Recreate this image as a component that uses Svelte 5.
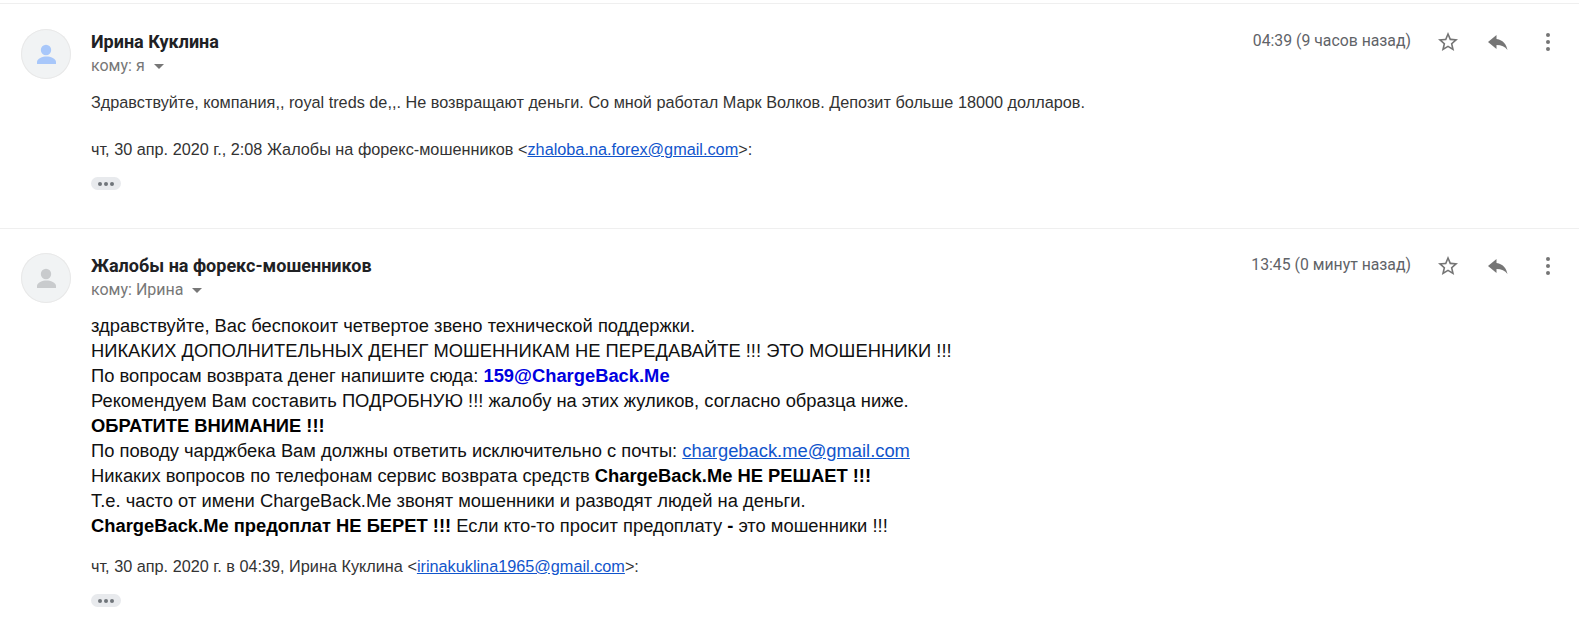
<script>
	const messages = [
		{ from: 'Ирина Куклина', to: 'кому: я', time: '04:39 (9 часов назад)', avatar: 'blue' },
		{ from: 'Жалобы на форекс-мошенников', to: 'кому: Ирина', time: '13:45 (0 минут назад)', avatar: 'grey' }
	];
</script>

{#snippet header(m)}
	<div class="avatar {m.avatar}">
		<svg viewBox="0 0 50 50" width="50" height="50">
			<circle cx="25" cy="21" r="5.2" />
			<path d="M16 33c0-3.500 5.500-5.500 9.500-5.500S35 29.500 35 33v2H16z" />
		</svg>
	</div>
	<div class="who">
		<div class="from">{m.from}</div>
		<div class="to">{m.to}<span class="caret"></span></div>
	</div>
	<div class="time">{m.time}</div>
	<div class="actions">
		<svg viewBox="0 0 24 24" width="24" height="24">
			<path d="M22 9.240l-7.190-.62L12 2 9.190 8.630 2 9.240l5.460 4.730L5.820 21 12 17.270 18.180 21l-1.630-7.030L22 9.240zM12 15.400l-3.760 2.270 1-4.280-3.320-2.880 4.380-.38L12 6.100l1.710 4.040 4.380.38-3.320 2.880 1 4.280L12 15.400z" />
		</svg>
		<svg viewBox="0 0 24 24" width="24" height="24">
			<path d="M10.500 9V5l-8.500 7 8.500 7v-4.100c5 0 8.500 1.600 11 5.100-1-5-4-10-11-11z" />
		</svg>
		<svg class="more" viewBox="0 0 24 24" width="24" height="24">
			<circle cx="12" cy="5" r="2" />
			<circle cx="12" cy="12" r="2" />
			<circle cx="12" cy="19" r="2" />
		</svg>
	</div>
{/snippet}

{#snippet dots()}
	<div class="dots"><i></i><i></i><i></i></div>
{/snippet}

<div class="thread">
	<section class="msg first">
		<header>{@render header(messages[0])}</header>
		<div class="body small">
			<p class="intro">Здравствуйте, компания,, royal treds de,,. Не возвращают деньги. Со мной работал Марк Волков. Депозит больше 18000 долларов.</p>
			<p class="quote-line">чт, 30 апр. 2020 г., 2:08 Жалобы на форекс-мошенников &lt;<a href="#a">zhaloba.na.forex@gmail.com</a>&gt;:</p>
			{@render dots()}
		</div>
	</section>

	<section class="msg second">
		<header>{@render header(messages[1])}</header>
		<div class="body">
			<div class="big">
				<div>здравствуйте, Вас беспокоит четвертое звено технической поддержки.</div>
				<div>НИКАКИХ ДОПОЛНИТЕЛЬНЫХ ДЕНЕГ МОШЕННИКАМ НЕ ПЕРЕДАВАЙТЕ !!! ЭТО МОШЕННИКИ !!!</div>
				<div>По вопросам возврата денег напишите сюда: <b class="mail">159@ChargeBack.Me</b></div>
				<div>Рекомендуем Вам составить ПОДРОБНУЮ !!! жалобу на этих жуликов, согласно образца ниже.</div>
				<div><b>ОБРАТИТЕ ВНИМАНИЕ !!!</b></div>
				<div>По поводу чарджбека Вам должны ответить исключительно с почты: <a href="#b">chargeback.me@gmail.com</a></div>
				<div>Никаких вопросов по телефонам сервис возврата средств <b>ChargeBack.Me НЕ РЕШАЕТ !!!</b></div>
				<div>Т.е. часто от имени ChargeBack.Me звонят мошенники и разводят людей на деньги.</div>
				<div><b>ChargeBack.Me предоплат НЕ БЕРЕТ !!!</b> Если кто-то просит предоплату <b>-</b> это мошенники !!!</div>
			</div>
			<p class="quote-line after">чт, 30 апр. 2020 г. в 04:39, Ирина Куклина &lt;<a href="#c">irinakuklina1965@gmail.com</a>&gt;:</p>
			{@render dots()}
		</div>
	</section>
</div>

<style>
	:global(body) {
		margin: 0;
		background: #fff;
	}

	.thread {
		font-family: 'Liberation Sans', Arial, sans-serif;
		color: #222;
		height: 621px;
		overflow: hidden;
		padding-top: 3px;
		box-sizing: border-box;
	}

	.msg {
		border-top: 1px solid #efefef;
		padding-left: 21px;
	}

	.first {
		height: 225px;
		padding-top: 25px;
		box-sizing: border-box;
	}

	.second {
		padding-top: 24px;
	}

	header {
		display: flex;
		align-items: flex-start;
		height: 50px;
	}

	.avatar {
		width: 50px;
		height: 50px;
		border-radius: 50%;
		background: #f1f3f4;
		box-shadow: inset 0 0 0 1px #e8e8e8;
		flex: none;
	}

	.avatar svg {
		display: block;
	}

	.avatar.blue svg {
		fill: #a8c7fa;
	}

	.avatar.grey svg {
		fill: #c9cbcd;
	}

	.who {
		margin-left: 20px;
		flex: 1;
	}

	.from {
		font-family: Roboto, sans-serif;
		font-weight: 700;
		font-size: 18px;
		line-height: 20px;
		margin-top: 3px;
		color: #202124;
	}

	.to {
		font-family: Roboto, sans-serif;
		font-size: 16px;
		line-height: 20px;
		margin-top: 4px;
		color: #777;
		display: flex;
		align-items: center;
	}

	.caret {
		width: 0;
		height: 0;
		border: 5px solid transparent;
		border-top-color: #777;
		border-bottom: 0;
		margin-left: 9px;
	}

	.time {
		font-family: Roboto, sans-serif;
		font-size: 15.8px;
		line-height: 20px;
		color: #5f6368;
		margin-top: 2px;
		margin-right: 25px;
	}

	.actions {
		display: flex;
		gap: 26px;
		margin-top: 1px;
		margin-right: 19px;
	}

	.actions svg {
		fill: #757575;
	}

	.body {
		margin-left: 70px;
	}

	.small {
		margin-top: 13px;
	}

	p {
		margin: 0;
	}

	.intro,
	.quote-line {
		font-size: 16.25px;
		line-height: 20px;
		color: #333;
	}

	.first .quote-line {
		margin-top: 27px;
	}

	.big {
		font-size: 18.35px;
		line-height: 25px;
		color: #111;
		margin-top: 10px;
	}

	.big b {
		color: #000;
	}

	.big b.mail {
		color: #0000e0;
	}

	.after {
		margin-top: 18px;
	}

	a {
		color: #1155cc;
		text-decoration: underline;
	}

	.dots {
		display: flex;
		align-items: center;
		justify-content: center;
		gap: 2px;
		width: 30px;
		height: 13px;
		border-radius: 7px;
		background: #e8eaed;
		margin-top: 18px;
	}

	.dots i {
		width: 4px;
		height: 4px;
		border-radius: 50%;
		background: #70757a;
	}
</style>
